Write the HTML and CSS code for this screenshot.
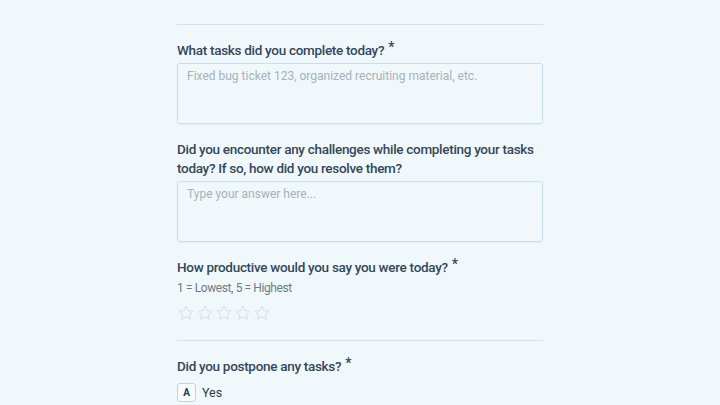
FILE: index.html
```html
<!DOCTYPE html>
<html>
<head>
    <title>Daily Check-in</title>
    <link rel="stylesheet" href="styles.css">
</head>
<body>
    <div class="form">
        <hr class="divider">

        <div class="question">
            <label class="q-label">What tasks did you complete today? <span class="req">*</span></label>
            <textarea class="answer" placeholder="Fixed bug ticket 123, organized recruiting material, etc."></textarea>
        </div>

        <div class="question">
            <label class="q-label">Did you encounter any challenges while completing your tasks today? If so, how did you resolve them?</label>
            <textarea class="answer" placeholder="Type your answer here..."></textarea>
        </div>

        <div class="question">
            <label class="q-label">How productive would you say you were today? <span class="req">*</span></label>
            <p class="q-hint">1 = Lowest, 5 = Highest</p>
            <div class="stars">
                <svg class="star" viewBox="0 0 24 24"><path d="M12 2.8l2.8 5.9 6.4.8-4.7 4.4 1.2 6.4L12 17.1l-5.7 3.2 1.2-6.4-4.7-4.4 6.4-.8z"/></svg>
                <svg class="star" viewBox="0 0 24 24"><path d="M12 2.8l2.8 5.9 6.4.8-4.7 4.4 1.2 6.4L12 17.1l-5.7 3.2 1.2-6.4-4.7-4.4 6.4-.8z"/></svg>
                <svg class="star" viewBox="0 0 24 24"><path d="M12 2.8l2.8 5.9 6.4.8-4.7 4.4 1.2 6.4L12 17.1l-5.7 3.2 1.2-6.4-4.7-4.4 6.4-.8z"/></svg>
                <svg class="star" viewBox="0 0 24 24"><path d="M12 2.8l2.8 5.9 6.4.8-4.7 4.4 1.2 6.4L12 17.1l-5.7 3.2 1.2-6.4-4.7-4.4 6.4-.8z"/></svg>
                <svg class="star" viewBox="0 0 24 24"><path d="M12 2.8l2.8 5.9 6.4.8-4.7 4.4 1.2 6.4L12 17.1l-5.7 3.2 1.2-6.4-4.7-4.4 6.4-.8z"/></svg>
            </div>
        </div>

        <hr class="divider">

        <div class="question">
            <label class="q-label">Did you postpone any tasks? <span class="req">*</span></label>
            <div class="choice">
                <span class="choice-key">A</span>
                <span class="choice-text">Yes</span>
            </div>
        </div>
    </div>
</body>
</html>
```

FILE: styles.css
```css
* {
    margin: 0;
    padding: 0;
    box-sizing: border-box;
}

body {
    background: #f1f8fc;
    font-family: Roboto, "Noto Sans", sans-serif;
    color: #2b3d4a;
    overflow: hidden;
}

.form {
    width: 366px;
    margin: 0 auto;
    padding-top: 24px;
}

.divider {
    border: none;
    border-top: 1px solid #d3e3ea;
}

.question {
    padding-top: 16px;
}

.q-label {
    display: block;
    font-size: 13.5px;
    line-height: 19px;
    font-weight: 500;
    letter-spacing: -0.3px;
    color: #33475a;
}

.req {
    font-size: 14px;
    line-height: 0;
    vertical-align: 3px;
    margin-left: 1px;
}

.answer {
    display: block;
    width: 100%;
    height: 61px;
    margin-top: 3px;
    border: 1px solid #c9e0ea;
    border-radius: 3px;
    background: #f1f8fc;
    padding: 5px 9px;
    font-family: Roboto, "Noto Sans", sans-serif;
    font-size: 12px;
    resize: none;
    box-shadow: 0 1px 2px rgba(40, 90, 120, 0.06);
}

.answer::placeholder {
    color: #a6b2b9;
}

.q-hint {
    font-size: 12px;
    line-height: 16px;
    margin-top: 3px;
    letter-spacing: -0.4px;
    color: #6d7b84;
}

.stars {
    display: flex;
    gap: 1px;
    margin-top: 8px;
    padding-bottom: 18px;
}

.star {
    width: 18px;
    height: 18px;
    fill: none;
    stroke: #cfdee5;
    stroke-width: 1.3;
    stroke-linejoin: round;
}

.choice {
    display: flex;
    align-items: center;
    gap: 6px;
    margin-top: 7px;
}

.choice-key {
    width: 19px;
    height: 19px;
    border: 1px solid #b9d6e3;
    border-radius: 3px;
    background: #f7fbfd;
    font-size: 10px;
    font-weight: 700;
    display: flex;
    align-items: center;
    justify-content: center;
}

.choice-text {
    font-size: 12.5px;
}
```
